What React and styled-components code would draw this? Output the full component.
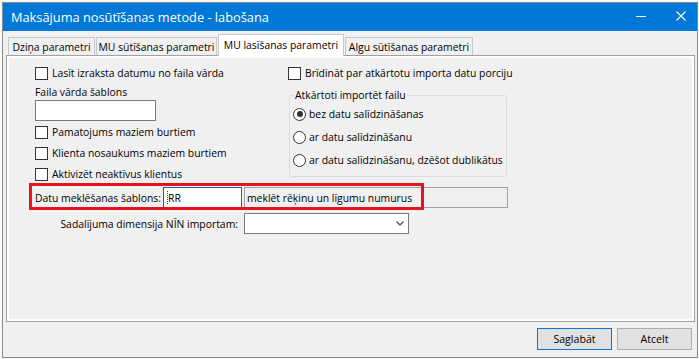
import React from 'react';
import styled, { createGlobalStyle } from 'styled-components';

const GlobalStyle = createGlobalStyle`
  html, body { margin: 0; padding: 0; }
  body {
    width: 699px;
    height: 359px;
    overflow: hidden;
    background: #fafafa;
    font-family: "Open Sans", "Noto Sans", sans-serif;
    font-size: 10.4px;
    color: #000;
  }
  * { box-sizing: border-box; }
`;

const Window = styled.div`
  margin: 2px 0 0 2px;
  width: 696px;
  height: 356px;
  border: 1px solid #8a8a8a;
  background: #f0f0f0;
  display: flex;
  flex-direction: column;
`;

const TitleBar = styled.div`
  height: 28px;
  background: #0078d7;
  display: flex;
  align-items: center;
  padding: 0 11px 0 8px;
`;

const Title = styled.div`
  color: #fff;
  font-size: 12.8px;
  line-height: 18px;
`;

const CaptionButtons = styled.div`
  margin-left: auto;
  display: flex;
  align-items: center;
  gap: 30px;
  margin-bottom: 3px;
`;

const Body = styled.div`
  flex: 1;
  display: flex;
  flex-direction: column;
  padding: 3px 2px 0 3px;
`;

const TabStrip = styled.div`
  display: flex;
  align-items: flex-end;
  padding-left: 2px;
  height: 21px;
  position: relative;
  z-index: 1;
`;

const Tab = styled.div`
  width: ${p => p.$w}px;
  height: ${p => (p.$active ? 22 : 18)}px;
  margin-bottom: ${p => (p.$active ? -1 : 0)}px;
  margin-right: 1px;
  border: 1px solid #c8c8c8;
  border-bottom: none;
  background: ${p => (p.$active ? '#fff' : '#f0f0f0')};
  display: flex;
  align-items: center;
  justify-content: center;
  white-space: nowrap;
  padding-bottom: ${p => (p.$active ? 2 : 0)}px;
`;

const Panel = styled.div`
  height: 267px;
  border: 1px solid #a0a0a0;
  background: #fff;
  padding: 2px;
`;

const Page = styled.div`
  height: 100%;
  background: #f0f0f0;
  padding: 8px 0 0 26px;
  display: flex;
  flex-direction: column;
`;

const TopSection = styled.div`
  display: flex;
`;

const LeftColumn = styled.div`
  width: 253px;
  display: flex;
  flex-direction: column;
`;

const RightColumn = styled.div`
  display: flex;
  flex-direction: column;
`;

const CheckRow = styled.label`
  display: flex;
  align-items: center;
  gap: 4px;
  height: 14px;
  margin-top: ${p => p.$top || 0}px;
  white-space: nowrap;
`;

const Box = styled.span`
  width: 13px;
  height: 13px;
  border: 1px solid #333;
  background: #fff;
  flex-shrink: 0;
`;

const FieldLabel = styled.div`
  height: 14px;
  line-height: 14px;
  margin-top: ${p => p.$top || 0}px;
`;

const TextBox = styled.div`
  width: ${p => p.$w}px;
  height: 21px;
  margin-top: ${p => p.$top || 0}px;
  border: 1px solid #7a7a7a;
  background: #fff;
  flex-shrink: 0;
`;

const GroupBox = styled.fieldset`
  margin: 8px 0 0 1px;
  width: 218px;
  height: 89px;
  border: 1px solid #dcdcdc;
  border-radius: 3px;
  padding: 0 0 0 3px;
  display: flex;
  flex-direction: column;
`;

const Legend = styled.legend`
  line-height: 14px;
  padding: 0 1px;
  margin-left: 1px;
`;

const RadioRow = styled.label`
  display: flex;
  align-items: center;
  gap: 3px;
  height: 14px;
  margin-top: ${p => p.$top}px;
  white-space: nowrap;
`;

const Radio = styled.span`
  width: 13px;
  height: 13px;
  border: 1px solid #333;
  border-radius: 50%;
  background: #fff;
  display: flex;
  align-items: center;
  justify-content: center;
  flex-shrink: 0;
  &::after {
    content: '';
    display: ${p => (p.$checked ? 'block' : 'none')};
    width: 6px;
    height: 6px;
    border-radius: 50%;
    background: #333;
  }
`;

const SearchRow = styled.div`
  position: relative;
  display: flex;
  align-items: center;
  height: 21px;
  margin-top: 6px;
`;

const SearchLabel = styled.div`
  width: 128px;
  flex-shrink: 0;
  white-space: nowrap;
`;

const FocusInput = styled.div`
  width: 79px;
  height: 21px;
  flex-shrink: 0;
  border: 1px solid #1e5f9a;
  background: #fff;
  display: flex;
  align-items: center;
  padding-left: 3px;
`;

const Caret = styled.span`
  width: 1px;
  height: 13px;
  border-left: 1px dotted #4a4a10;
`;

const ReadOnlyBox = styled.div`
  width: 264px;
  height: 21px;
  flex-shrink: 0;
  margin-left: 2px;
  border: 1px solid #a0a0a0;
  background: #f0f0f0;
  display: flex;
  align-items: center;
  padding-left: 2px;
  white-space: nowrap;
`;

const Highlight = styled.div`
  position: absolute;
  left: -6px;
  top: -4px;
  width: 395px;
  height: 27px;
  border: 3px solid #e3151f;
  pointer-events: none;
`;

const DimensionRow = styled.div`
  display: flex;
  align-items: center;
  height: 21px;
  margin-top: 5px;
`;

const DimLabel = styled.div`
  width: 209px;
  text-align: right;
  padding-right: 6px;
  white-space: nowrap;
`;

const Combo = styled.div`
  width: 165px;
  height: 21px;
  border: 1px solid #7a7a7a;
  background: #fff;
  display: flex;
  align-items: center;
  justify-content: flex-end;
  padding-right: 4px;
`;

const ButtonRow = styled.div`
  display: flex;
  justify-content: flex-end;
  gap: 5px;
  margin-top: 6px;
  margin-right: 3px;
`;

const Button = styled.button`
  width: 75px;
  height: 22px;
  border: 1px solid ${p => (p.$primary ? '#0078d7' : '#adadad')};
  background: #e1e1e1;
  font-family: inherit;
  font-size: 10.6px;
  color: #000;
  padding: 0;
`;

const tabs = [
  { label: 'Dziņa parametri', w: 87 },
  { label: 'MU sūtīšanas parametri', w: 121 },
  { label: 'MU lasīšanas parametri', w: 126, active: true },
  { label: 'Algu sūtīšanas parametri', w: 128 },
];

const Check = ({ children, top }) => (
  <CheckRow $top={top}>
    <Box />
    <span>{children}</span>
  </CheckRow>
);

export default function App() {
  return (
    <>
      <GlobalStyle />
      <Window>
        <TitleBar>
          <Title>Maksājuma nosūtīšanas metode - labošana</Title>
          <CaptionButtons>
            <svg width="10" height="10" viewBox="0 0 10 10">
              <line x1="0" y1="5.5" x2="10" y2="5.5" stroke="#fff" strokeWidth="1" />
            </svg>
            <svg width="10" height="10" viewBox="0 0 10 10">
              <path d="M0.5 0.5 L9.5 9.5 M9.5 0.5 L0.5 9.5" stroke="#fff" strokeWidth="1.1" />
            </svg>
          </CaptionButtons>
        </TitleBar>
        <Body>
          <TabStrip>
            {tabs.map(t => (
              <Tab key={t.label} $w={t.w} $active={t.active}>{t.label}</Tab>
            ))}
          </TabStrip>
          <Panel>
            <Page>
              <TopSection>
                <LeftColumn>
                  <Check>Lasīt izraksta datumu no faila vārda</Check>
                  <FieldLabel $top={5}>Faila vārda šablons</FieldLabel>
                  <TextBox $w={121} $top={1} />
                  <Check top={4}>Pamatojums maziem burtiem</Check>
                  <Check top={7}>Klienta nosaukums maziem burtiem</Check>
                  <Check top={7}>Aktivizēt neaktīvus klientus</Check>
                </LeftColumn>
                <RightColumn>
                  <Check>Brīdināt par atkārtotu importa datu porciju</Check>
                  <GroupBox>
                    <Legend>Atkārtoti importēt failu</Legend>
                    <RadioRow $top={5}><Radio $checked /><span>bez datu salīdzināšanas</span></RadioRow>
                    <RadioRow $top={9}><Radio /><span>ar datu salīdzināšanu</span></RadioRow>
                    <RadioRow $top={9}><Radio /><span>ar datu salīdzināšanu, dzēšot dublikātus</span></RadioRow>
                  </GroupBox>
                </RightColumn>
              </TopSection>
              <SearchRow>
                <SearchLabel>Datu meklēšanas šablons:</SearchLabel>
                <FocusInput><Caret />RR</FocusInput>
                <ReadOnlyBox>meklēt rēķinu un līgumu numurus</ReadOnlyBox>
                <Highlight />
              </SearchRow>
              <DimensionRow>
                <DimLabel>Sadalījuma dimensija NĪN importam:</DimLabel>
                <Combo>
                  <svg width="8" height="5" viewBox="0 0 8 5">
                    <path d="M0.5 0.5 L4 4 L7.5 0.5" fill="none" stroke="#555" strokeWidth="1.4" />
                  </svg>
                </Combo>
              </DimensionRow>
            </Page>
          </Panel>
          <ButtonRow>
            <Button $primary>Saglabāt</Button>
            <Button>Atcelt</Button>
          </ButtonRow>
        </Body>
      </Window>
    </>
  );
}
